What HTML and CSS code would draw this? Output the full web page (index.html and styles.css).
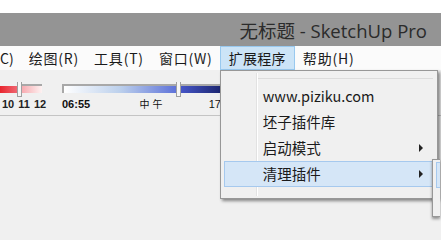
FILE: index.html
```html
<!DOCTYPE html>
<html lang="zh-CN">
<head>
    <meta charset="UTF-8">
    <title>无标题 - SketchUp Pro</title>
    <link rel="stylesheet" href="styles.css">
</head>
<body>
    <div class="top-strip"></div>
    <header class="titlebar">
        <span class="title">无标题 - SketchUp Pro</span>
    </header>
    <nav class="menubar">
        <span class="menu-item cut">C)</span>
        <span class="menu-item">绘图(R)</span>
        <span class="menu-item">工具(T)</span>
        <span class="menu-item">窗口(W)</span>
        <span class="menu-item active">扩展程序
            <div class="dropdown">
                <div class="dropdown-line"></div>
                <div class="dropdown-row">www.piziku.com</div>
                <div class="dropdown-row">坯子插件库</div>
                <div class="dropdown-row has-sub">启动模式<span class="arrow"></span></div>
                <div class="dropdown-row has-sub hover">清理插件<span class="arrow"></span></div>
            </div>
            <div class="submenu">
                <div class="submenu-row"></div>
            </div>
        </span>
        <span class="menu-item">帮助(H)</span>
    </nav>
    <div class="toolbar">
        <div class="slider month">
            <div class="track">
                <div class="fill-red"></div>
                <div class="handle"></div>
                <div class="fill-pink"></div>
            </div>
            <div class="labels">
                <span>10</span><span>11</span><span>12</span>
            </div>
        </div>
        <div class="slider time">
            <div class="track">
                <div class="fill-light"></div>
                <div class="handle"></div>
                <div class="fill-dark"></div>
            </div>
            <div class="labels">
                <span>06:55</span><span class="noon">中午</span><span>17</span>
            </div>
        </div>
    </div>
    <div class="workspace"></div>
</body>
</html>
```

FILE: styles.css
```css
body {
    margin: 0;
    width: 441px;
    height: 240px;
    overflow: hidden;
    background-color: #f0f0f0;
    font-family: 'Open Sans', 'Noto Sans CJK SC', sans-serif;
    color: #1a1a1a;
}

.top-strip {
    height: 13px;
    background-color: #ffffff;
}

.titlebar {
    height: 33px;
    background-color: #949494;
    display: flex;
    justify-content: flex-end;
    align-items: center;
    padding-right: 14px;
}

.titlebar .title {
    font-family: 'Open Sans', 'Noto Sans CJK SC', sans-serif;
    font-size: 18.5px;
    color: #2b2b2b;
}

.menubar {
    height: 24px;
    background-color: #fbfbfb;
    display: flex;
    align-items: stretch;
    font-family: 'Noto Sans CJK SC', sans-serif;
    font-size: 14px;
}

.menu-item {
    position: relative;
    display: flex;
    align-items: center;
    padding: 0 7px;
    margin-right: -1px;
    border: 1px solid transparent;
    line-height: 1;
    letter-spacing: 0.8px;
}

.menu-item.cut {
    padding-left: 0;
    margin-left: -1px;
    margin-right: -1px;
    letter-spacing: 0;
}

.menu-item.active {
    padding: 0 8px;
    letter-spacing: 0.3px;
    background-color: #cce4f7;
    border-color: #99c9ef;
    margin-right: 0;
}

.dropdown {
    position: absolute;
    top: 23px;
    left: -1px;
    width: 218px;
    height: 129px;
    box-sizing: border-box;
    padding-top: 12px;
    background-color: #f0f0f0;
    border: 1px solid #979797;
    box-shadow: 2px 2px 3px rgba(0, 0, 0, 0.45);
    z-index: 3;
    font-size: 14.5px;
    letter-spacing: 0;
}

.dropdown::before {
    content: '';
    position: absolute;
    top: 2px;
    bottom: 2px;
    left: 35px;
    width: 1px;
    background-color: #e2e2e2;
    border-right: 1px solid #ffffff;
}

.dropdown-line {
    position: absolute;
    top: 7px;
    left: 37px;
    right: 4px;
    height: 1px;
    background-color: #dcdcdc;
}

.dropdown-row {
    position: relative;
    height: 26px;
    display: flex;
    align-items: center;
    margin: 0 3px;
    padding-left: 38px;
    border: 1px solid transparent;
    box-sizing: border-box;
}

.dropdown-row:first-of-type {
    font-family: 'Open Sans', sans-serif;
}

.dropdown-row.hover {
    background-color: #d5e6f7;
    border-color: #a6c9ee;
}

.arrow {
    position: absolute;
    right: 10px;
    top: 8px;
    border-left: 4px solid #222;
    border-top: 4px solid transparent;
    border-bottom: 4px solid transparent;
}

.submenu {
    position: absolute;
    top: 112px;
    left: 211px;
    width: 8px;
    height: 58px;
    box-sizing: border-box;
    padding-top: 2px;
    background-color: #f0f0f0;
    border: 1px solid #979797;
    border-right: none;
    box-shadow: 0 2px 3px rgba(0, 0, 0, 0.4);
    z-index: 4;
}

.submenu-row {
    height: 26px;
    margin-left: 3px;
    background-color: #d5e6f7;
    border: 1px solid #a6c9ee;
    border-right: none;
    box-sizing: border-box;
}

.toolbar {
    height: 46px;
    box-sizing: border-box;
    padding-top: 12px;
    background-color: #f0f0f0;
    border-bottom: 1px solid #c4c4c4;
    display: flex;
    align-items: flex-start;
    font-family: 'Liberation Sans', sans-serif;
    font-size: 11px;
    font-weight: bold;
    color: #222;
}

.slider .track {
    position: relative;
    display: flex;
    height: 7px;
    margin-top: 2px;
    border-top: 2px solid #a8a8a8;
}

.slider .handle {
    position: absolute;
    top: -4px;
    width: 3px;
    height: 14px;
    background-color: #f6f6f6;
    border: 1px solid #a0a0a0;
    border-top: none;
}

.slider .labels {
    display: flex;
    margin-top: 5px;
    line-height: 12px;
}

.month {
    width: 42px;
}

.month .track {
    border-top-color: transparent;
}

.month .fill-red {
    width: 18px;
    background: linear-gradient(to right, #e8252e, #f06a75);
}

.month .handle {
    left: 17px;
}

.month .fill-pink {
    flex: 1;
    margin-left: 3px;
    margin-top: -2px;
    border-top: 2px solid #a8a8a8;
    background: linear-gradient(to right, #f7a7ad, #fdf2f2);
}

.month .labels {
    gap: 4px;
    padding-left: 2px;
}

.time {
    width: 159px;
    margin-left: 20px;
}

.time .track {
    border-left: 2px solid #a8a8a8;
}

.time .fill-light {
    width: 112px;
    background: linear-gradient(to right, #ffffff, #bcd0ec 50%, #5f73d9);
}

.time .handle {
    left: 112px;
}

.time .fill-dark {
    flex: 1;
    margin-left: 4px;
    background: linear-gradient(to right, #4656c9, #1c2670);
}

.time .labels {
    justify-content: space-between;
    font-weight: normal;
    color: #111;
}

.time .labels span:first-child {
    font-weight: bold;
}

.time .noon {
    font-family: 'Noto Sans CJK SC', sans-serif;
    font-size: 10px;
    letter-spacing: 3px;
    margin-left: 6px;
}
```
